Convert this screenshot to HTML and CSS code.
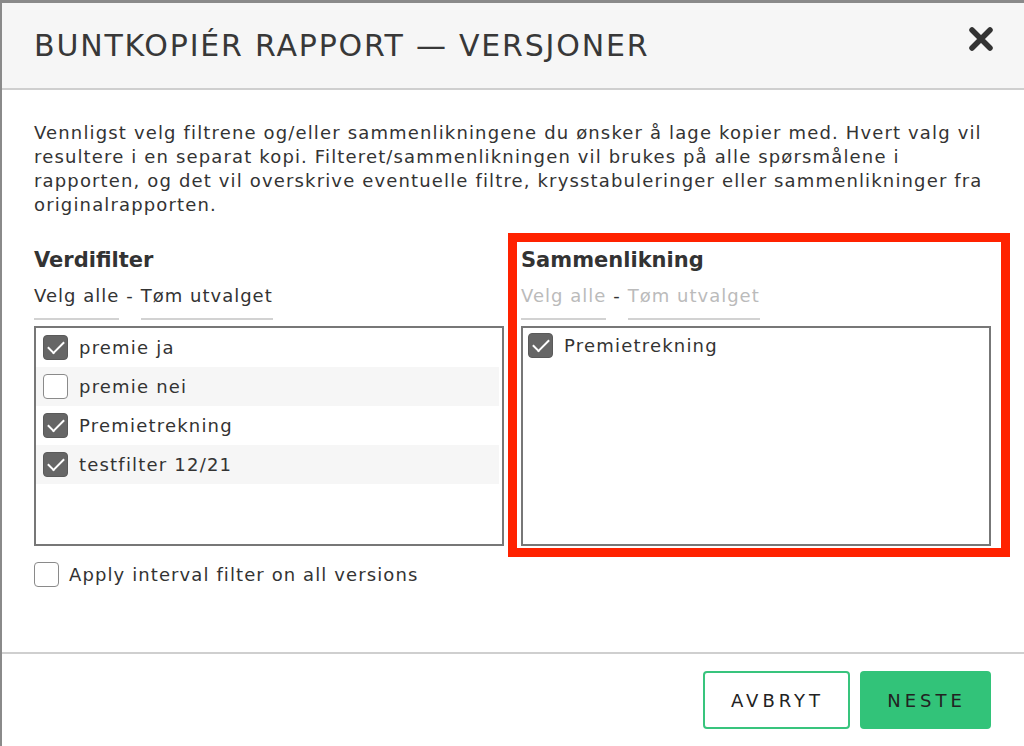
FILE: index.html
```html
<!DOCTYPE html>
<html lang="no">

<head>
  <meta charset="UTF-8">
  <meta name="viewport" content="width=device-width, initial-scale=1.0">
  <title>Buntkopiér rapport</title>
  <link rel="stylesheet" href="styles.css">
</head>

<body>
  <div class="modal">
    <div class="modal-header">
      <h1>BUNTKOPIÉR RAPPORT — VERSJONER</h1>
      <button class="close" title="Lukk">
        <svg width="26" height="26" viewBox="0 0 26 26">
          <path d="M4 4 L22 22 M22 4 L4 22" stroke="#333" stroke-width="5.5" stroke-linecap="round" />
        </svg>
      </button>
    </div>

    <div class="modal-body">
      <p class="intro">Vennligst velg filtrene og/eller sammenlikningene du ønsker å lage kopier med. Hvert valg vil
        resultere i en separat kopi. Filteret/sammenlikningen vil brukes på alle spørsmålene i rapporten, og det vil
        overskrive eventuelle filtre, krysstabuleringer eller sammenlikninger fra originalrapporten.</p>

      <div class="columns">
        <div class="column">
          <h2>Verdifilter</h2>
          <div class="links">
            <a href="#">Velg alle</a><span class="dash">-</span><a href="#">Tøm utvalget</a>
          </div>
          <div class="list">
            <label class="row"><span class="check checked"></span>premie ja</label>
            <label class="row"><span class="check"></span>premie nei</label>
            <label class="row"><span class="check checked"></span>Premietrekning</label>
            <label class="row"><span class="check checked"></span>testfilter 12/21</label>
          </div>
        </div>

        <div class="column compare">
          <h2>Sammenlikning</h2>
          <div class="links disabled">
            <a href="#">Velg alle</a><span class="dash">-</span><a href="#">Tøm utvalget</a>
          </div>
          <div class="list">
            <label class="row plain"><span class="check checked"></span>Premietrekning</label>
          </div>
        </div>
      </div>

      <label class="apply"><span class="check"></span>Apply interval filter on all versions</label>
    </div>

    <div class="modal-footer">
      <button class="btn btn-outline">AVBRYT</button>
      <button class="btn btn-primary">NESTE</button>
    </div>
  </div>
</body>

</html>
```

FILE: styles.css
```css
body {
  margin: 0;
  background: #8a8a8a;
  font-family: "DejaVu Sans", Arial, sans-serif;
  color: #333;
  overflow: hidden;
}

.modal {
  margin: 3px 0 0 2px;
  background: #fff;
  height: calc(100vh - 3px);
}

.modal-header {
  height: 85px;
  background: #f6f6f6;
  border-bottom: 2px solid #cfcfcf;
  display: flex;
  align-items: center;
  justify-content: space-between;
  padding: 0 30px 0 32px;
}

.modal-header h1 {
  margin: 0;
  font-size: 30px;
  font-weight: 400;
  letter-spacing: 1.8px;
  color: #383838;
}

.close {
  border: none;
  background: none;
  padding: 0;
  margin-top: -14px;
  cursor: pointer;
  line-height: 0;
}

.modal-body {
  padding: 31px 33px 0 32px;
}

.intro {
  margin: 0;
  font-size: 18px;
  line-height: 24px;
  letter-spacing: 1.15px;
}

.columns {
  display: grid;
  grid-template-columns: 470px 470px;
  gap: 17px;
  align-items: start;
  margin-top: 29px;
}

.column h2 {
  margin: 0;
  font-size: 21px;
  line-height: 28px;
  font-weight: 700;
}

.links {
  margin-top: 10px;
  font-size: 18px;
  line-height: 24px;
  letter-spacing: 1px;
  display: flex;
}

.links a {
  color: #333;
  text-decoration: none;
  padding-bottom: 10px;
  border-bottom: 2px solid #d2d2d2;
}

.links .dash {
  margin: 0 7px;
}

.links.disabled a {
  color: #bbb;
}

.list {
  margin-top: 6px;
  height: 216px;
  border: 2px solid #777;
  padding-right: 3px;
}

.row {
  height: 39px;
  display: flex;
  align-items: center;
  gap: 11px;
  padding-left: 7px;
  font-size: 18px;
  letter-spacing: 1.2px;
}

.row:nth-child(even) {
  background: #f6f6f6;
}

.row.plain {
  height: 34px;
  padding-left: 5px;
}

.check {
  width: 25px;
  height: 25px;
  box-sizing: border-box;
  border: 1.5px solid #8a8a8a;
  border-radius: 4px;
  background: #fff;
  display: inline-flex;
  align-items: center;
  justify-content: center;
  flex: none;
}

.check.checked {
  background: #666;
  border-color: #5a5a5a;
}

.check.checked::after {
  content: "";
  width: 14px;
  height: 7px;
  border-left: 2px solid #fff;
  border-bottom: 2px solid #fff;
  transform: translateY(-2px) rotate(-45deg);
}

.compare {
  position: relative;
}

.compare::after {
  content: "";
  position: absolute;
  left: -13px;
  right: -19px;
  top: -13px;
  bottom: -11px;
  border: 9px solid #ff2200;
  pointer-events: none;
}

.apply {
  display: flex;
  align-items: center;
  gap: 10px;
  margin-top: 16px;
  font-size: 18px;
  letter-spacing: 1.1px;
}

.modal-footer {
  margin-top: 65px;
  border-top: 2px solid #cfcfcf;
  padding: 17px 33px 0 0;
  display: flex;
  justify-content: flex-end;
  gap: 10px;
}

.btn {
  height: 58px;
  border-radius: 4px;
  font-family: inherit;
  font-size: 18px;
  letter-spacing: 4px;
  padding-left: 8px;
  color: #222;
  cursor: pointer;
}

.btn-outline {
  width: 147px;
  background: #fff;
  border: 2px solid #38c47d;
}

.btn-primary {
  width: 131px;
  background: #32c379;
  border: none;
}
```
